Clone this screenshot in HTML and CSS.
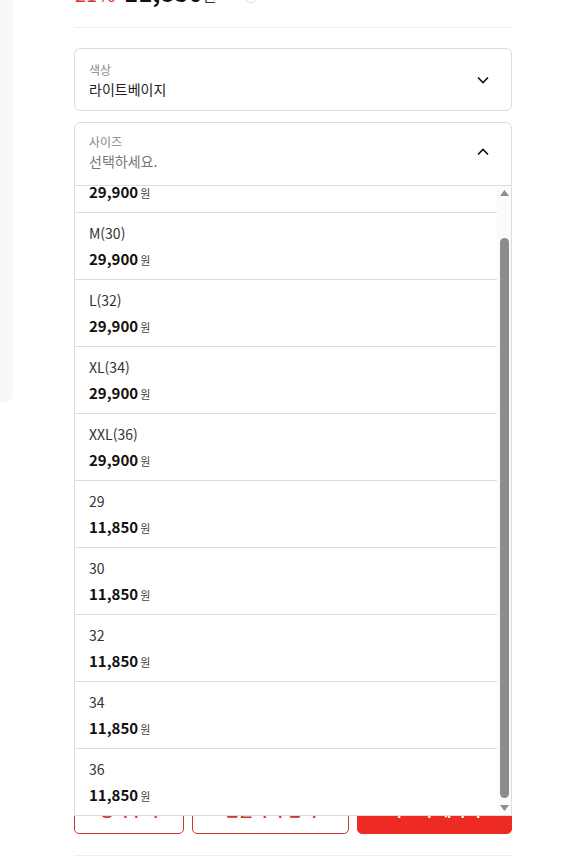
FILE: index.html
```html
<!DOCTYPE html>
<html lang="ko">
<head>
<meta charset="utf-8">
<title>옵션 선택</title>
<link rel="stylesheet" href="styles.css">
</head>
<body>
<div class="page">
  <div class="side"></div>
  <main class="main">
    <div class="price-row">
      <span class="rate">21%</span>
      <span class="amount">11,850</span><span class="won">원</span>
      <span class="info">ⓘ</span>
    </div>

    <div class="select">
      <div class="select-text">
        <div class="select-label">색상</div>
        <div class="select-value">라이트베이지</div>
      </div>
      <svg class="chev" width="12" height="8" viewBox="0 0 12 8"><path d="M1 1.5 L6 6.5 L11 1.5" fill="none" stroke="#111" stroke-width="1.6"/></svg>
    </div>

    <div class="select select-open">
      <div class="select-text">
        <div class="select-label">사이즈</div>
        <div class="select-value placeholder">선택하세요.</div>
      </div>
      <svg class="chev" width="12" height="8" viewBox="0 0 12 8"><path d="M1 6.5 L6 1.5 L11 6.5" fill="none" stroke="#111" stroke-width="1.6"/></svg>

      <div class="dropdown">
        <ul class="options" id="options">
          <li class="option"><div class="opt-name">S(28)</div><div class="opt-price"><b>29,900</b><span>원</span></div></li>
          <li class="option"><div class="opt-name">M(30)</div><div class="opt-price"><b>29,900</b><span>원</span></div></li>
          <li class="option"><div class="opt-name">L(32)</div><div class="opt-price"><b>29,900</b><span>원</span></div></li>
          <li class="option"><div class="opt-name">XL(34)</div><div class="opt-price"><b>29,900</b><span>원</span></div></li>
          <li class="option"><div class="opt-name">XXL(36)</div><div class="opt-price"><b>29,900</b><span>원</span></div></li>
          <li class="option"><div class="opt-name">29</div><div class="opt-price"><b>11,850</b><span>원</span></div></li>
          <li class="option"><div class="opt-name">30</div><div class="opt-price"><b>11,850</b><span>원</span></div></li>
          <li class="option"><div class="opt-name">32</div><div class="opt-price"><b>11,850</b><span>원</span></div></li>
          <li class="option"><div class="opt-name">34</div><div class="opt-price"><b>11,850</b><span>원</span></div></li>
          <li class="option"><div class="opt-name">36</div><div class="opt-price"><b>11,850</b><span>원</span></div></li>
        </ul>
        <div class="scrollbar">
          <div class="sb-btn"><svg width="9" height="6" viewBox="0 0 9 6"><path d="M4.5 0 L9 6 L0 6 Z" fill="#8c8c8c"/></svg></div>
          <div class="sb-track"><div class="sb-thumb"></div></div>
          <div class="sb-btn"><svg width="9" height="6" viewBox="0 0 9 6"><path d="M0 0 L9 0 L4.5 6 Z" fill="#8c8c8c"/></svg></div>
        </div>
      </div>
    </div>

    <div class="buttons">
      <button class="btn btn-line">장바구니</button>
      <button class="btn btn-line">선물하기 담기</button>
      <button class="btn btn-fill">바로 구매하기</button>
    </div>

    <div class="bottom-line"></div>
  </main>
</div>
<script src="script.js"></script>
</body>
</html>
```

FILE: styles.css
```css
* { box-sizing: border-box; }

html, body {
  margin: 0;
  padding: 0;
  background: #fff;
  overflow: hidden;
}

body {
  font-family: "Noto Sans CJK KR", "Noto Sans", sans-serif;
  color: #222;
}

.page {
  display: flex;
  align-items: flex-start;
}

.side {
  flex: none;
  width: 12px;
  height: 402px;
  background: #f8f8f8;
  border-radius: 0 0 10px 0;
  box-shadow: 1px 1px 2px rgba(0,0,0,0.03);
}

.main {
  margin-left: 62px;
  width: 438px;
}

.price-row {
  margin-top: -24px;
  height: 52px;
  line-height: 32px;
  border-bottom: 1px solid #eeeeee;
  white-space: nowrap;
  overflow: visible;
}

.rate {
  font-size: 20px;
  color: #e8312f;
  margin-left: 1px;
}

.amount {
  font-size: 24px;
  font-weight: 700;
  color: #111;
  margin-left: 4px;
}

.won {
  font-size: 15px;
  color: #333;
}

.info {
  font-size: 12px;
  color: #aaa;
  margin-left: 24px;
}

.select {
  position: relative;
  margin-top: 20px;
  border: 1px solid #dddddd;
  border-radius: 6px;
  padding: 12px 14px 11px;
  display: flex;
  align-items: center;
  justify-content: space-between;
  background: #fff;
}

.select + .select {
  margin-top: 11px;
}

.select-open {
  border-radius: 6px 6px 0 0;
  padding-top: 10px;
  padding-bottom: 14px;
}

.select-label {
  font-size: 12px;
  line-height: 18px;
  height: 18px;
  color: #888;
}

.select-value {
  font-size: 14px;
  line-height: 20px;
  height: 20px;
  color: #222;
}

.placeholder {
  color: #777;
}

.chev {
  margin-right: 8px;
  display: block;
}

.dropdown {
  position: absolute;
  top: calc(100% + 1px);
  left: -1px;
  right: -1px;
  height: 630px;
  display: flex;
  background: #fff;
  border: 1px solid #dddddd;
  border-top: none;
  z-index: 5;
}

.options {
  flex: 1;
  margin: 0;
  padding: 0;
  list-style: none;
  overflow-y: auto;
  scrollbar-width: none;
}

.options::-webkit-scrollbar {
  display: none;
}

.option {
  height: 67px;
  padding: 10px 14px 0;
  border-bottom: 1px solid #dddddd;
}

.option:last-child {
  height: 66px;
  border-bottom: none;
}

.opt-name {
  font-size: 14px;
  line-height: 20px;
  height: 20px;
  color: #333;
}

.opt-price {
  margin-top: 3px;
  line-height: 24px;
  height: 24px;
  white-space: nowrap;
}

.opt-price b {
  font-size: 15px;
  font-weight: 700;
  color: #111;
}

.opt-price span {
  font-size: 11px;
  color: #444;
  margin-left: 2px;
}

.scrollbar {
  flex: none;
  width: 14px;
  display: flex;
  flex-direction: column;
  background: #fbfbfb;
}

.sb-btn {
  height: 14px;
  display: flex;
  align-items: center;
  justify-content: center;
}

.sb-btn svg {
  display: block;
}

.sb-track {
  flex: 1;
  display: flex;
  flex-direction: column;
  justify-content: flex-end;
  align-items: center;
  padding-bottom: 3px;
}

.sb-thumb {
  width: 9px;
  height: 560px;
  border-radius: 5px;
  background: #8c8c8c;
}

.buttons {
  margin-top: 598px;
  display: grid;
  grid-template-columns: 110px 157px 1fr;
  gap: 8px;
}

.btn {
  height: 50px;
  border-radius: 5px;
  font-family: inherit;
  font-size: 16px;
  font-weight: 700;
}

.btn-line {
  background: #fff;
  border: 1px solid #c9383a;
  color: #d3322f;
}

.btn-fill {
  background: #ee2a24;
  border: 1px solid #ee2a24;
  color: #fff;
}

.bottom-line {
  margin-top: 21px;
  border-top: 1px solid #eeeeee;
}
```

FILE: script.js
```js
var list = document.getElementById('options');
list.scrollTop = list.scrollHeight;
```
